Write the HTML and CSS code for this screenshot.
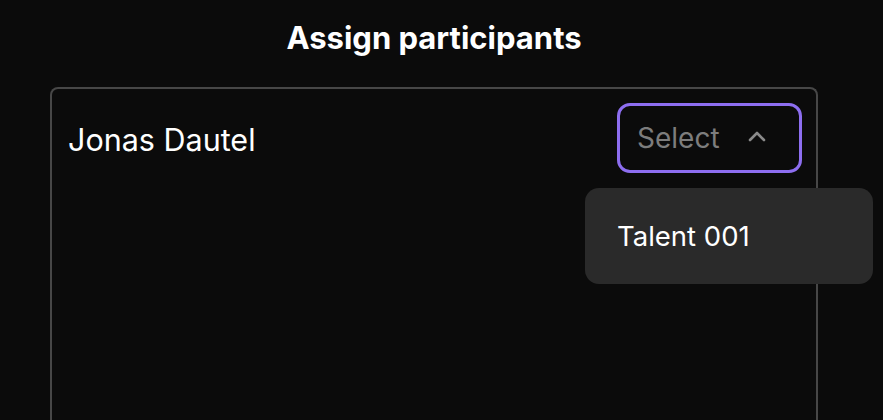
FILE: index.html
```html
<!DOCTYPE html>
<html>
<head>
<meta charset="utf-8">
<link rel="stylesheet" href="styles.css">
</head>
<body>
<div class="page">
  <h1 class="title">Assign participants</h1>
  <div class="panel">
    <div class="row">
      <span class="name">Jonas Dautel</span>
      <div class="select-wrap">
        <button class="select">
          <span class="placeholder">Select</span>
          <svg class="chev" width="18" height="12" viewBox="0 0 18 12"><path d="M2 10 L9 3 L16 10" fill="none" stroke="#8a8a8a" stroke-width="2.6" stroke-linecap="round" stroke-linejoin="round"/></svg>
        </button>
        <div class="menu">
          <div class="option">Talent 001</div>
        </div>
      </div>
    </div>
  </div>
</div>
</body>
</html>
```
FILE: styles.css
```css
html, body {
  margin: 0;
  padding: 0;
  background: #0b0b0b;
  font-family: Inter, "Noto Sans", sans-serif;
  color: #fff;
  height: 420px;
  overflow: hidden;
}
.page {
  margin-left: 50px;
  width: 768px;
}
.title {
  margin: 0;
  padding-top: 20px;
  height: 87px;
  box-sizing: border-box;
  text-align: center;
  font-size: 31px;
  font-weight: 700;
  line-height: 36px;
}
.panel {
  height: 333px;
  box-sizing: border-box;
  border: 2px solid #474747;
  border-bottom: none;
  border-radius: 8px 8px 0 0;
}
.row {
  display: flex;
  justify-content: space-between;
  align-items: center;
  padding: 14px 14px 0 16px;
}
.name {
  font-size: 30.5px;
  line-height: 32px;
  margin-top: 3px;
}
.select-wrap {
  position: relative;
}
.select {
  display: flex;
  align-items: center;
  justify-content: space-between;
  box-sizing: border-box;
  width: 185px;
  height: 70px;
  padding: 0 33px 0 17px;
  background: transparent;
  border: 3px solid #8d6ef0;
  border-radius: 13px;
  font-family: inherit;
  font-size: 28px;
  color: #7d7d7d;
}
.chev {
  margin-top: -4px;
}
.menu {
  position: absolute;
  top: 85px;
  right: -71px;
  width: 288px;
  height: 96px;
  box-sizing: border-box;
  background: #2a2a2a;
  border-radius: 14px;
  display: flex;
  align-items: center;
  padding-left: 32px;
}
.option {
  font-size: 27.5px;
  color: #fff;
}
```
